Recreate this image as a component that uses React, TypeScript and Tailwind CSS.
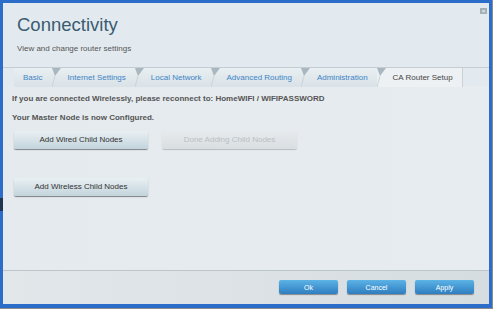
import React from "react";

const tabs = [
  { label: "Basic", first: true },
  { label: "Internet Settings" },
  { label: "Local Network" },
  { label: "Advanced Routing" },
  { label: "Administration" },
  { label: "CA Router Setup", active: true },
];

const Notch = () => (
  <svg className="absolute left-0 top-0" width="10" height="19" viewBox="0 0 10 19">
    <polygon points="0,0 9,0 3,8" fill="#a9b7c0" />
    <line x1="3" y1="8" x2="0" y2="19" stroke="#c9d3d9" strokeWidth="1" />
  </svg>
);

const Tab = ({ label, first, active }: { label: string; first?: boolean; active?: boolean }) => (
  <div
    className={`relative flex items-center h-[19px] pr-[9px] ${first ? "pl-[9px]" : "pl-[16px]"} ${
      active
        ? "bg-[#edf1f3] text-[#454545] border-r border-[#c9d1d5] pr-[4px]"
        : "bg-gradient-to-b from-[#e9eff2] to-[#d9e2e7] text-[#3d85c6]"
    }`}>
    {!first && <Notch />}
    <span className="text-[8px] leading-none whitespace-nowrap">{label}</span>
  </div>
);

const GrayButton = ({ children, disabled }: { children: React.ReactNode; disabled?: boolean }) => (
  <button
    className={`h-[18px] rounded-[2px] text-[8px] leading-none ${
      disabled
        ? "w-[135px] bg-gradient-to-b from-[#e6eaec] to-[#d9dee1] text-[#b9bfc3] shadow-[0_1px_1px_rgba(0,0,0,0.2)]"
        : "w-[134px] bg-gradient-to-b from-[#e9f0f3] to-[#c3d4dc] text-[#333] shadow-[0_1px_1px_rgba(0,0,0,0.45)]"
    }`}>
    {children}
  </button>
);

const BlueButton = ({ children }: { children: React.ReactNode }) => (
  <button className="w-[59px] h-[14px] rounded-[2px] bg-gradient-to-b from-[#5cb3e6] to-[#2f7ec0] text-white text-[7px] leading-none shadow-[0_1px_1px_rgba(0,0,0,0.4)]">
    {children}
  </button>
);

export default function App() {
  return (
    <div
      className="w-[493px] h-[309px] bg-[#8c8c8c] pr-px pb-px"
      style={{ fontFamily: '"Liberation Sans", Arial, sans-serif' }}>
      <div className="w-[492px] h-[308px] border-[3px] border-b-[4px] border-[#2b6dc8] bg-[#e3eaef] flex flex-col relative">
        <div className="absolute left-[-3px] top-[195px] w-[3px] h-[13px] bg-[#1d3550]" />
        <div className="h-[64px] px-[14px] pt-[11px] relative">
          <div className="text-[18.5px] leading-[22px] text-[#3a5c72]">Connectivity</div>
          <div className="mt-[8px] text-[8px] leading-[10px] text-[#555]">View and change router settings</div>
          <div className="absolute right-[2px] top-[5px] w-[7px] h-[6px] bg-[#a3afb7] flex items-center justify-center text-white text-[6px] leading-none">
            ×
          </div>
        </div>
        <div className="h-[19px] border-t border-[#c3cdd3] flex pl-[11px] bg-[#e3eaef]">
          {tabs.map((t) => (
            <Tab key={t.label} label={t.label} first={t.first} active={t.active} />
          ))}
        </div>
        <div className="flex-1 bg-gradient-to-r from-[#e4eaee] to-[#e6ecef] px-[9px] pt-[8px]">
          <div className="text-[8px] leading-[10px] font-bold text-[#555]">
            If you are connected Wirelessly, please reconnect to: HomeWIFI / WIFIPASSWORD
          </div>
          <div className="mt-[9px] text-[8px] leading-[10px] font-bold text-[#555]">
            Your Master Node is now Configured.
          </div>
          <div className="mt-[8px] pl-[2px] flex gap-[14px]">
            <GrayButton>Add Wired Child Nodes</GrayButton>
            <GrayButton disabled>Done Adding Child Nodes</GrayButton>
          </div>
          <div className="mt-[29px] pl-[2px] flex">
            <GrayButton>Add Wireless Child Nodes</GrayButton>
          </div>
        </div>
        <div className="h-[34px] border-t border-[#bcc5ca] bg-gradient-to-r from-[#e2e7ea] to-[#d6dde1] flex justify-end items-start pt-[9px] pr-[15px] gap-[9px]">
          <BlueButton>Ok</BlueButton>
          <BlueButton>Cancel</BlueButton>
          <BlueButton>Apply</BlueButton>
        </div>
      </div>
    </div>
  );
}
